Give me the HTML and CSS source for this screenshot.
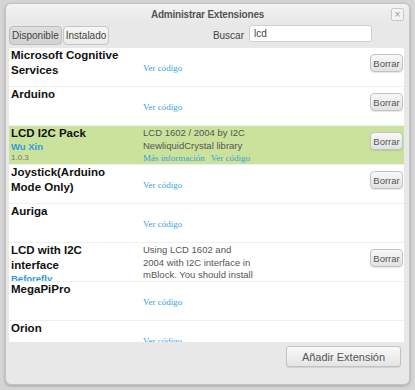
FILE: index.html
```html
<!DOCTYPE html>
<html lang="es">
<head>
    <meta charset="UTF-8">
    <title>Administrar Extensiones</title>
    <link rel="stylesheet" href="styles.css">
</head>
<body>
    <div class="dialog">
        <header class="dialog-header">
            <h1>Administrar Extensiones</h1>
            <button class="close-btn" aria-label="Cerrar">&times;</button>
        </header>

        <section class="toolbar">
            <button class="tab active">Disponible</button>
            <button class="tab">Instalado</button>
            <label class="search-label" for="searchInput">Buscar</label>
            <input id="searchInput" class="search-input" type="text" value="lcd">
        </section>

        <ul class="ext-list">
            <li class="ext-row">
                <div class="ext-name"><strong>Microsoft Cognitive Services</strong></div>
                <div class="ext-desc">
                    <p class="desc-text"></p>
                    <p class="links"><a href="#">Ver código</a></p>
                </div>
                <button class="btn-remove">Borrar</button>
            </li>
            <li class="ext-row">
                <div class="ext-name"><strong>Arduino</strong></div>
                <div class="ext-desc">
                    <p class="desc-text"></p>
                    <p class="links"><a href="#">Ver código</a></p>
                </div>
                <button class="btn-remove">Borrar</button>
            </li>
            <li class="ext-row selected">
                <div class="ext-name">
                    <strong>LCD I2C Pack</strong>
                    <span class="author">Wu Xin</span>
                    <span class="version">1.0.3</span>
                </div>
                <div class="ext-desc">
                    <p class="desc-text">LCD 1602 / 2004 by I2C NewliquidCrystal library</p>
                    <p class="links"><a href="#">Más información</a><a href="#">Ver código</a></p>
                </div>
                <button class="btn-remove">Borrar</button>
            </li>
            <li class="ext-row">
                <div class="ext-name"><strong>Joystick(Arduino Mode Only)</strong></div>
                <div class="ext-desc">
                    <p class="desc-text"></p>
                    <p class="links"><a href="#">Ver código</a></p>
                </div>
                <button class="btn-remove">Borrar</button>
            </li>
            <li class="ext-row">
                <div class="ext-name"><strong>Auriga</strong></div>
                <div class="ext-desc">
                    <p class="desc-text"></p>
                    <p class="links"><a href="#">Ver código</a></p>
                </div>
            </li>
            <li class="ext-row">
                <div class="ext-name">
                    <strong>LCD with I2C interface</strong>
                    <span class="author">Beforefly</span>
                </div>
                <div class="ext-desc">
                    <p class="desc-text">Using LCD 1602 and 2004 with I2C interface in mBlock. You should install</p>
                    <p class="links"><a href="#">Ver código</a></p>
                </div>
                <button class="btn-remove">Borrar</button>
            </li>
            <li class="ext-row">
                <div class="ext-name"><strong>MegaPiPro</strong></div>
                <div class="ext-desc">
                    <p class="desc-text"></p>
                    <p class="links"><a href="#">Ver código</a></p>
                </div>
            </li>
            <li class="ext-row">
                <div class="ext-name"><strong>Orion</strong></div>
                <div class="ext-desc">
                    <p class="desc-text"></p>
                    <p class="links"><a href="#">Ver código</a></p>
                </div>
            </li>
        </ul>

        <footer class="dialog-footer">
            <button class="btn-add">Añadir Extensión</button>
        </footer>
    </div>
</body>
</html>
```

FILE: styles.css
```css
/* 全局 */
* {
    margin: 0;
    padding: 0;
    box-sizing: border-box;
}

body {
    font-family: 'Liberation Sans', Arial, sans-serif;
    background-color: #d5d5d5;
    color: #333;
    width: 415px;
    height: 390px;
    overflow: hidden;
}

button {
    font-family: inherit;
    cursor: pointer;
}

/* 对话框 */
.dialog {
    width: 405px;
    height: 382px;
    margin: 3px 0 0 5px;
    background-color: #e8e8e8;
    border: 1px solid #c4c4c4;
    border-radius: 6px;
    box-shadow: 0 1px 3px rgba(0,0,0,0.25);
    display: flex;
    flex-direction: column;
    overflow: hidden;
}

.dialog-header {
    position: relative;
    height: 20px;
    display: flex;
    align-items: center;
    justify-content: center;
    background: linear-gradient(#f2f2f2, #e8e8e8);
}

.dialog-header h1 {
    font-size: 10px;
    font-weight: bold;
    color: #555;
    letter-spacing: -0.2px;
    padding-top: 1px;
}

.close-btn {
    position: absolute;
    right: 5px;
    top: 4px;
    width: 13px;
    height: 13px;
    border: 1px solid #c8c8c8;
    border-radius: 2px;
    background: #f4f4f4;
    color: #999;
    font-size: 10px;
    line-height: 10px;
}

/* 工具栏 */
.toolbar {
    display: flex;
    align-items: center;
    height: 20px;
    padding: 0 0 0 3px;
    margin-top: 1px;
}

.tab {
    height: 19px;
    padding: 0 2px;
    margin-right: 1px;
    font-size: 10px;
    color: #444;
    border: 1px solid #c6c6c6;
    border-radius: 4px;
    background: linear-gradient(#f6f6f6, #eaeaea);
}

.tab.active {
    background: linear-gradient(#dedede, #d2d2d2);
    border-color: #bcbcbc;
}

.search-label {
    margin-left: auto;
    font-size: 10px;
    color: #444;
    margin-right: 5px;
}

.search-input {
    width: 123px;
    height: 17px;
    margin-right: 37px;
    padding: 0 4px;
    font-family: inherit;
    font-size: 10px;
    color: #444;
    border: 1px solid #cfcfcf;
    border-radius: 3px;
    background: #fff;
    margin-bottom: 3px;
}

/* 扩展列表 */
.ext-list {
    list-style: none;
    width: 395px;
    height: 294px;
    margin: 3px 0 0 3px;
    background-color: #fff;
    overflow: hidden;
}

.ext-row {
    display: flex;
    height: 39px;
    border-bottom: 1px solid #efefef;
    overflow: hidden;
}

.ext-row.selected {
    background-color: #cbe29d;
}

.ext-name {
    width: 134px;
    flex-shrink: 0;
    padding: 0 14px 0 2px;
    display: flex;
    flex-direction: column;
}

.ext-name strong {
    font-size: 11.5px;
    line-height: 15px;
    color: #111;
}

.author {
    font-size: 9.5px;
    font-weight: bold;
    line-height: 12px;
    color: #2f9ae0;
}

.version {
    font-size: 8px;
    line-height: 10px;
    color: #777;
}

.ext-desc {
    width: 111.4px;
    flex-shrink: 0;
    padding-top: 1px;
}

.desc-text {
    min-height: 12.5px;
    font-size: 9.5px;
    line-height: 12.5px;
    color: #555;
}

.links {
    font-family: 'Liberation Serif', 'Times New Roman', serif;
    font-size: 9px;
    line-height: 12px;
    white-space: nowrap;
}

.links a {
    color: #3a9fdc;
    text-decoration: none;
    margin-right: 6px;
}

.btn-remove {
    margin: 6px 1px 0 auto;
    width: 33px;
    height: 18px;
    font-size: 9.5px;
    color: #555;
    border: 1px solid #c2c2c2;
    border-radius: 4px;
    background: linear-gradient(#f8f8f8, #e2e2e2);
    box-shadow: 0 1px 1px rgba(0,0,0,0.1);
}

/* 底部 */
.dialog-footer {
    display: flex;
    justify-content: flex-end;
    padding: 4px 8px 0 0;
}

.btn-add {
    width: 115px;
    height: 21px;
    font-size: 11px;
    color: #555;
    border: 1px solid #c2c2c2;
    border-radius: 3px;
    background: linear-gradient(#fafafa, #e4e4e4);
    box-shadow: 0 1px 1px rgba(0,0,0,0.1);
}
```
